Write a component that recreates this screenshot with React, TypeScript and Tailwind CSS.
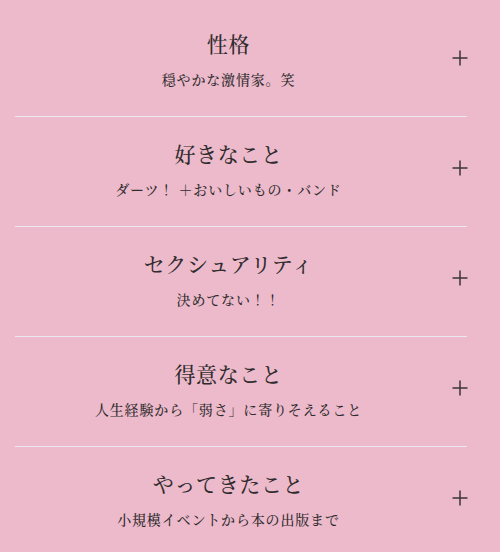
const items = [
  { title: '性格', body: '穏やかな激情家。笑' },
  { title: '好きなこと', body: 'ダーツ！ ＋おいしいもの・バンド' },
  { title: 'セクシュアリティ', body: '決めてない！！' },
  { title: '得意なこと', body: '人生経験から「弱さ」に寄りそえること' },
  { title: 'やってきたこと', body: '小規模イベントから本の出版まで' },
]

function PlusIcon() {
  return (
    <svg className="w-[16px] h-[16px] text-[#3a3638]" viewBox="0 0 16 16" fill="none">
      <path d="M8 0.5V15.5M0.5 8H15.5" stroke="currentColor" strokeWidth={1.5} />
    </svg>
  )
}

export default function App() {
  return (
    <div
      className="w-full min-h-[552px] bg-[#edbacb] pt-[7px] text-[#302c2e]"
      style={{ fontFamily: '"Noto Serif CJK JP", "Noto Sans CJK JP", serif' }}
    >
      <div className="ml-[15px] w-[452px]">
        {items.map((item) => (
          <div key={item.title} className="flex items-start h-[110px] border-b border-[#ede8f0]">
            <div className="flex-1 flex flex-col items-center pt-[21px]">
              <h2 className="text-[21px] leading-[30px] tracking-[0.03em] font-medium">{item.title}</h2>
              <p className="mt-[10px] text-[14px] leading-[22px] tracking-[0.06em] font-medium">{item.body}</p>
            </div>
            <div className="w-[26px] mt-[43px] flex justify-end -mr-px">
              <PlusIcon />
            </div>
          </div>
        ))}
      </div>
    </div>
  )
}
